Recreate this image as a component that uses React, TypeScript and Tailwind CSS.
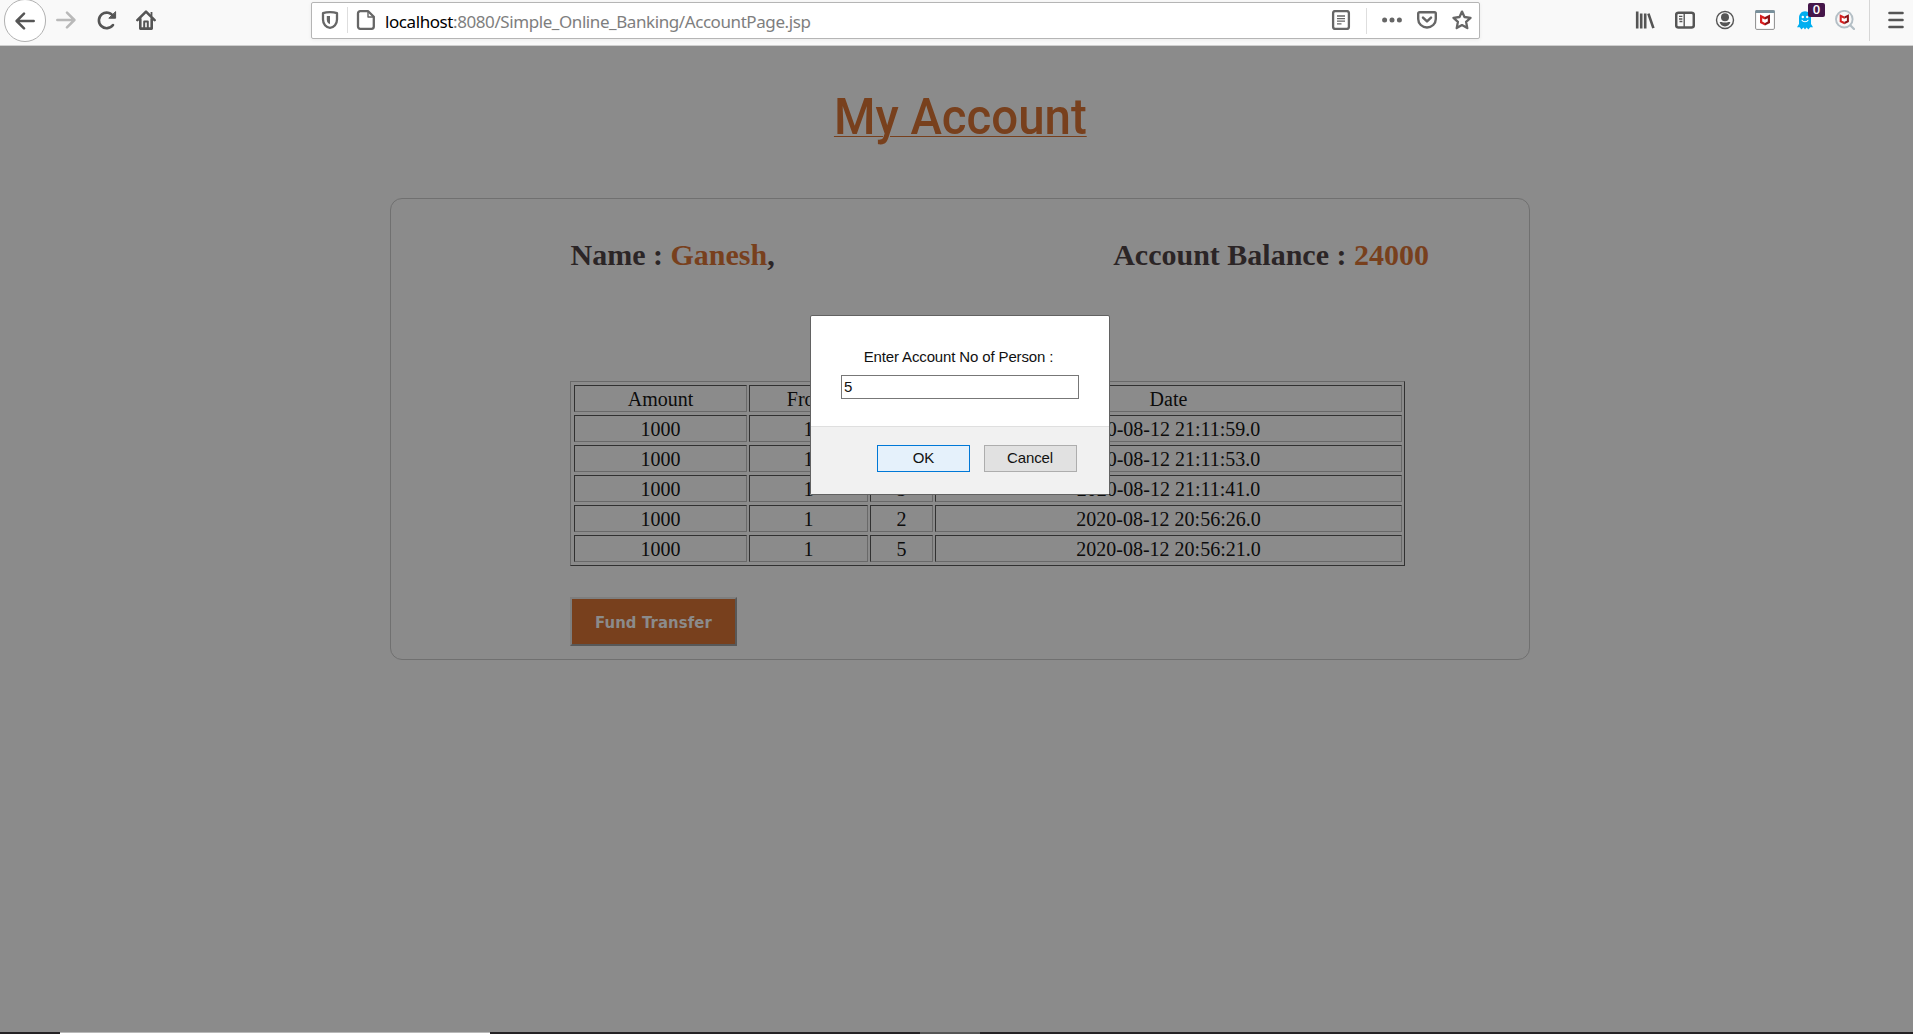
import React from "react";

const rows = [
  ["Amount", "From", "To", "Date"],
  ["1000", "1", "5", "2020-08-12 21:11:59.0"],
  ["1000", "1", "5", "2020-08-12 21:11:53.0"],
  ["1000", "1", "5", "2020-08-12 21:11:41.0"],
  ["1000", "1", "2", "2020-08-12 20:56:26.0"],
  ["1000", "1", "5", "2020-08-12 20:56:21.0"],
];

function Icon({ children, className = "" }: { children: React.ReactNode; className?: string }) {
  return (
    <svg
      viewBox="0 0 20 20"
      className={`h-5 w-5 shrink-0 ${className}`}
      fill="none"
      stroke="currentColor"
      strokeWidth="2.5"
      strokeLinecap="round"
      strokeLinejoin="round"
    >
      {children}
    </svg>
  );
}

function ShieldMark() {
  return (
    <>
      <path d="M5 4.5 10 7V15.4L5 13Z" fill="#d81e1e" stroke="none" />
      <path d="M15 4.5 10 7V15.4L15 13Z" fill="#8e1216" stroke="none" />
      <path d="M7.2 8.2 10 9.6 12.8 8.2V11.6L10 12.9 7.2 11.6Z" fill="#fff" stroke="none" />
    </>
  );
}

function Toolbar() {
  return (
    <header className="flex h-[46px] shrink-0 items-start border-b border-[#cfcfcf] bg-[#f9f9f9] text-[#555555]">
      <div className="flex w-[311px] shrink-0 items-start">
        <div className="-mt-[1px] ml-1 flex h-[43px] w-[42px] items-center justify-center rounded-full border border-[#b1b1b1] bg-white">
          <Icon>
            <path d="M18.7 10H2M9 2.6 1.6 10 9 17.4" />
          </Icon>
        </div>
        <Icon className="mt-[10px] ml-[10px] text-[#b9b9b9]">
          <path d="M1.3 10H18M11 2.6 18.4 10 11 17.4" />
        </Icon>
        <Icon className="mt-[10px] ml-[21px]">
          <path d="M16 15A7.8 7.8 0 1 1 16.4 6.4" strokeWidth="2.6" />
          <path d="M18.6 2V8.2H12.2Z" fill="currentColor" strokeWidth="1" />
        </Icon>
        <Icon className="mt-[10px] ml-[19px]">
          <path d="M1.4 10.2 10 1.6 18.6 10.2" strokeWidth="2.6" />
          <path d="M4.3 9V18.6H15.7V9" strokeWidth="2.6" />
          <path d="M8.2 18V11.6H11.8V18" strokeWidth="2" />
          <path d="M15.5 2V6" strokeLinecap="butt" strokeWidth="1.8" />
        </Icon>
      </div>

      <div className="mt-[2px] flex h-[37px] w-[1169px] shrink-0 items-start rounded-[2px] border border-[#b5b5b5] bg-white text-[#666666] shadow-[0_1px_4px_rgba(0,0,0,0.06)]">
        <Icon className="mt-[7px] ml-2">
          <path d="M10 2.2C12.5 2.2 15 2.5 17 3.2V9.5C17 14 14 17.6 10 17.8 6 17.6 3 14 3 9.5V3.2C5 2.5 7.5 2.2 10 2.2Z" strokeWidth="2.3" />
          <path d="M10 6V14C7.9 13.5 6.8 12 6.8 9.5V6Z" fill="currentColor" stroke="none" />
        </Icon>
        <span className="mt-[4px] ml-[7px] h-[26px] w-px bg-[#dedede]" />
        <Icon className="mt-[7px] ml-[8px]">
          <path d="M4.2 1.2H12.2L17.8 6.8V16.6A2.2 2.2 0 0 1 15.6 18.8H4.2A2.2 2.2 0 0 1 2 16.6V3.4A2.2 2.2 0 0 1 4.2 1.2Z" strokeWidth="2.3" />
          <path d="M12 1.5V7H17.5" strokeWidth="1.4" />
        </Icon>
        <div className="mt-[5px] ml-[9px] flex-1 font-['Noto_Sans'] text-[17px] leading-[27px] tracking-[-0.42px] whitespace-nowrap text-[#7e7e7e]">
          <span className="text-black">localhost</span>:8080/Simple_Online_Banking/AccountPage.jsp
        </div>
        <Icon className="mt-[7px] mr-[15px]">
          <rect x="2.1" y="1.1" width="15.8" height="17.8" rx="2.2" strokeWidth="2.3" />
          <path d="M6 6H14M6 8.6H14M6 11.2H14M6 13.8H10.5" strokeWidth="1.3" strokeLinecap="butt" />
        </Icon>
        <span className="mt-[5px] h-[26px] w-px bg-[#dedede]" />
        <Icon className="mt-[7px] ml-[15px]">
          <g fill="currentColor" stroke="none">
            <circle cx="2.6" cy="10" r="2.5" />
            <circle cx="10" cy="10" r="2.5" />
            <circle cx="17.4" cy="10" r="2.5" />
          </g>
        </Icon>
        <Icon className="mt-[7px] ml-[15px]">
          <path d="M2.5 2.2H17.5A1.3 1.3 0 0 1 18.8 3.5V9A8.8 8.5 0 0 1 1.2 9V3.5A1.3 1.3 0 0 1 2.5 2.2Z" strokeWidth="2.4" />
          <path d="M6 7.6 10 11.4 14 7.6" />
        </Icon>
        <Icon className="mt-[7px] mr-[7px] ml-[15px]">
          <path d="M10 1.6 12.5 7 18.5 7.8 14.1 11.9 15.3 18.1 10 15.1 4.7 18.1 5.9 11.9 1.5 7.8 7.5 7Z" strokeWidth="2.3" />
        </Icon>
      </div>

      <div className="flex flex-1 items-start pl-[155px]">
        <Icon className="mt-[10px]">
          <path d="M2.2 1.5V18.5M6.2 3.5V18.5M10.2 3.5V18.5M13.4 3.7 18.4 18.2" strokeWidth="2.6" strokeLinecap="butt" />
        </Icon>
        <Icon className="mt-[10px] ml-[20px]">
          <rect x="1.2" y="2.7" width="17.6" height="14.8" rx="2.2" strokeWidth="2.5" />
          <path d="M9.2 3V17" strokeWidth="1.4" />
          <path d="M4 6.3H7.4M4 9H7.4M4.5 11.5H7.4" strokeWidth="1.3" strokeLinecap="butt" />
        </Icon>
        <Icon className="mt-[10px] ml-[20px]">
          <circle cx="10" cy="10" r="8.5" strokeWidth="1.4" />
          <circle cx="10" cy="7.2" r="4" fill="currentColor" stroke="none" />
          <path d="M4.6 12.1C6 12 7 12.1 8 12.5H12C13 12.1 14 12 15.4 12.1 14.8 14.8 12.6 16.4 10 16.4S5.2 14.8 4.6 12.1Z" fill="currentColor" stroke="none" />
        </Icon>
        <Icon className="mt-[10px] ml-[20px]">
          <rect x="0.6" y="0.6" width="18.8" height="18.8" rx="1.2" fill="#fff" stroke="#8c8c8c" strokeWidth="1" />
          <path d="M0.3 0.3H19.7V3H0.3Z" fill="#78909c" stroke="none" />
          <ShieldMark />
        </Icon>
        <div className="relative mt-[10px] ml-[20px] h-5 w-5">
          <Icon>
            <path d="M4 8C4 4 6.5 1.2 10 1.2S16 4 16 8V14L18 17.2 15.2 17.3 13.4 19.4 11.6 17.6 10 19.4 8.4 17.6 6.4 19.4 4.8 17.3 2 17.2 4 14Z" fill="#00aef0" stroke="none" />
            <circle cx="7.8" cy="7" r="1.2" fill="#fff" stroke="none" />
            <circle cx="12.2" cy="7" r="1.2" fill="#fff" stroke="none" />
            <path d="M7 10.3C8 12.3 12 12.3 13 10.3" stroke="#fff" strokeWidth="1.1" />
          </Icon>
          <span className="absolute -top-[7px] left-[13px] flex h-[14px] w-[17px] items-center justify-center rounded-[2px] bg-[#45174a] pb-px font-['Open_Sans'] text-[13px] leading-none font-semibold text-white">
            0
          </span>
        </div>
        <Icon className="mt-[10px] ml-[20px]">
          <circle cx="9.3" cy="9.2" r="8.3" fill="#f7f7f7" stroke="#b4bfc6" strokeWidth="1.9" />
          <path d="M15.5 15.5 19 19" stroke="#b4bfc6" strokeWidth="2.3" />
          <g transform="translate(0.1 0) scale(0.92)">
            <ShieldMark />
          </g>
        </Icon>
        <span className="ml-[14px] h-[41px] w-px bg-[#d6d6d6]" />
        <Icon className="mt-[10px] ml-[16px]">
          <path d="M3.4 3H16.6M3.4 10H16.6M3.4 17H16.6" strokeWidth="2.4" />
        </Icon>
      </div>
    </header>
  );
}

function AccountTable() {
  return (
    <div className="grid h-[185px] w-[835px] grid-cols-[173px_119px_63px_467px] grid-rows-[repeat(6,27px)] gap-x-[2px] gap-y-[3px] border border-t-[#696969] border-r-[#313131] border-b-[#313131] border-l-[#696969] pt-[3px] pl-[3px] text-[20px] leading-[27px] text-[#0c0c0c]">
      {rows.flatMap((row, r) =>
        row.map((cell, c) => (
          <div
            key={`${r}-${c}`}
            className="border border-t-[#313131] border-r-[#696969] border-b-[#696969] border-l-[#313131] text-center"
          >
            {cell}
          </div>
        )),
      )}
    </div>
  );
}

function PromptDialog() {
  return (
    <div className="absolute top-[269px] left-[810px] flex h-[180px] w-[300px] flex-col rounded-[2px] border border-[#626262] bg-white font-['Liberation_Sans'] text-[15px] text-[#111]">
      <div className="flex h-[110px] flex-col px-[30px] pt-[31px]">
        <label className="pr-[3px] text-center leading-[20px] tracking-[-0.14px] whitespace-nowrap">
          Enter Account No of Person :
        </label>
        <input
          readOnly
          value="5"
          className="mt-[8px] h-[24px] w-[238px] border border-[#777] bg-white px-[2px] pb-[2px] outline-none"
        />
      </div>
      <div className="flex flex-1 items-start gap-[14px] border-t border-[#dfdfdf] bg-[#f1f1f1] pt-[18px] pl-[66px]">
        <button className="h-[27px] w-[93px] border border-[#0078d7] bg-[#e5f1fb] pb-[2px] leading-[23px] tracking-[-0.14px]">
          OK
        </button>
        <button className="h-[27px] w-[93px] border border-[#adadad] bg-[#e1e1e1] pr-px pb-[2px] leading-[23px] tracking-[-0.1px]">
          Cancel
        </button>
      </div>
    </div>
  );
}

export default function App() {
  return (
    <div className="flex h-[1034px] w-[1913px] flex-col overflow-hidden bg-[#8b8b8b]">
      <Toolbar />
      <main className="relative flex flex-1 flex-col items-center pl-[7px] font-['Liberation_Serif']">
        <h1 className="mt-[36px] h-[70px] scale-x-[0.948] font-['Roboto'] text-[50px] leading-[70px] font-medium whitespace-nowrap text-[#78401d] underline decoration-1 underline-offset-[2px]">
          My Account
        </h1>
        <section className="mt-[46px] flex h-[462px] w-[1140px] flex-col rounded-[12px] border border-[#707070] pl-[179px]">
          <div className="mt-[38px] flex w-[859px] justify-between pl-[0.5px] text-[30px] leading-[36px] font-bold text-[#2b2526]">
            <p>
              Name : <span className="text-[#78401d]">Ganesh</span>,
            </p>
            <p>
              Account Balance : <span className="text-[#78401d]">24000</span>
            </p>
          </div>
          <div className="mt-[108px]">
            <AccountTable />
          </div>
          <button className="mt-[31px] h-[49px] w-[167px] border-2 border-t-[#7e7e7e] border-r-[#585858] border-b-[#585858] border-l-[#7e7e7e] bg-[#78401d] pt-[3px] font-['DejaVu_Sans_Condensed','DejaVu_Sans'] text-[16.5px] font-bold tracking-[0.15px] whitespace-nowrap text-[#8b8b8b] [font-stretch:condensed]">
            Fund Transfer
          </button>
        </section>
        <PromptDialog />
      </main>
      <footer className="flex h-[2px] shrink-0 bg-[#242224]">
        <span className="ml-[60px] w-[430px] border-t border-[#b8b8b8] bg-white" />
        <span className="ml-[430px] w-[60px] bg-[#555]" />
      </footer>
    </div>
  );
}
